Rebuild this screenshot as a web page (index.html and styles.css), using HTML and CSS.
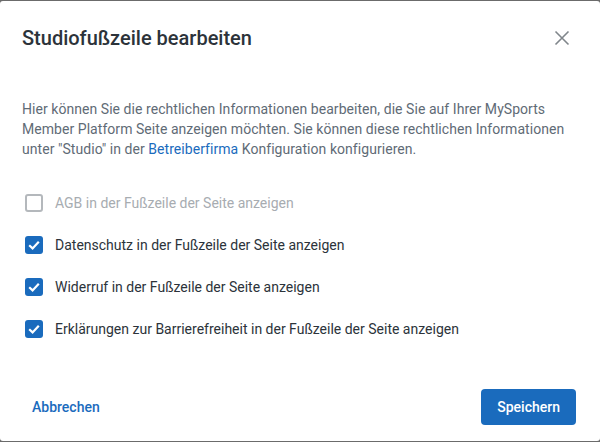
FILE: index.html
```html
<!DOCTYPE html>
<html lang="de">
<head>
    <meta charset="UTF-8">
    <meta name="viewport" content="width=device-width, initial-scale=1.0">
    <title>Studiofußzeile bearbeiten</title>
    <link rel="stylesheet" href="styles.css">
</head>
<body>
    <div class="dialog">
        <div class="dialog-header">
            <h1>Studiofußzeile bearbeiten</h1>
            <button class="close-btn" aria-label="Schließen">
                <svg width="16" height="16" viewBox="0 0 16 16">
                    <path d="M1.5 1.5 L14.5 14.5 M14.5 1.5 L1.5 14.5" stroke="currentColor" stroke-width="1.6" fill="none"/>
                </svg>
            </button>
        </div>

        <div class="dialog-body">
            <p class="intro">
                Hier können Sie die rechtlichen Informationen bearbeiten, die Sie auf Ihrer MySports
                Member Platform Seite anzeigen möchten. Sie können diese rechtlichen Informationen
                unter "Studio" in der <a href="#">Betreiberfirma</a> Konfiguration konfigurieren.
            </p>

            <div class="options">
                <label class="option disabled">
                    <span class="box"></span>
                    AGB in der Fußzeile der Seite anzeigen
                </label>
                <label class="option">
                    <span class="box checked"><svg viewBox="0 0 18 18"><path d="M4.2 9.2 L7.6 12.4 L13.8 5.8" /></svg></span>
                    Datenschutz in der Fußzeile der Seite anzeigen
                </label>
                <label class="option">
                    <span class="box checked"><svg viewBox="0 0 18 18"><path d="M4.2 9.2 L7.6 12.4 L13.8 5.8" /></svg></span>
                    Widerruf in der Fußzeile der Seite anzeigen
                </label>
                <label class="option">
                    <span class="box checked"><svg viewBox="0 0 18 18"><path d="M4.2 9.2 L7.6 12.4 L13.8 5.8" /></svg></span>
                    Erklärungen zur Barrierefreiheit in der Fußzeile der Seite anzeigen
                </label>
            </div>
        </div>

        <div class="dialog-footer">
            <button class="btn btn-text">Abbrechen</button>
            <button class="btn btn-primary">Speichern</button>
        </div>
    </div>
</body>
</html>
```

FILE: styles.css
```css
:root {
    --blue: #1a6bbd;
    --text: #2c333a;
    --muted: #5f6b76;
}

html, body {
    height: 100%;
}

body {
    margin: 0;
    padding: 1px 0;
    box-sizing: border-box;
    background: #6b6b6b;
    font-family: Roboto, "Noto Sans", sans-serif;
    color: var(--text);
}

.dialog {
    height: 440px;
    background: #fff;
    border-radius: 3px;
    display: flex;
    flex-direction: column;
}

.dialog-header {
    display: flex;
    align-items: center;
    justify-content: space-between;
    padding: 23px 30px 0 22px;
}

.dialog-header h1 {
    margin: 0;
    font-size: 20px;
    line-height: 28px;
    font-weight: 500;
    color: var(--text);
}

.close-btn {
    border: 0;
    background: none;
    padding: 0;
    color: #80868b;
    display: flex;
}

.dialog-body {
    padding: 0 22px;
}

.intro {
    margin: 47px 0 0;
    font-size: 14px;
    line-height: 20px;
    letter-spacing: 0.05px;
    color: var(--muted);
}

.intro a {
    color: var(--blue);
    text-decoration: none;
}

.options {
    margin-top: 23px;
    padding-left: 3px;
}

.option {
    display: flex;
    align-items: center;
    gap: 12px;
    height: 42px;
    font-size: 14px;
    color: var(--text);
}

.option.disabled {
    color: #a7acb1;
}

.box {
    width: 18px;
    height: 18px;
    box-sizing: border-box;
    border: 2px solid #b4b8bc;
    border-radius: 3px;
    flex-shrink: 0;
}

.box.checked {
    border: 0;
    background: var(--blue);
}

.box svg {
    display: block;
    width: 18px;
    height: 18px;
}

.box path {
    fill: none;
    stroke: #fff;
    stroke-width: 2.2;
}

.dialog-footer {
    margin-top: auto;
    display: flex;
    justify-content: space-between;
    align-items: center;
    padding: 0 24px 16px 16px;
}

.btn {
    font-family: inherit;
    font-size: 14px;
    font-weight: 500;
    height: 36px;
    padding: 0 16px;
    border: 0;
    border-radius: 4px;
    background: none;
}

.btn-text {
    color: var(--blue);
}

.btn-primary {
    background: var(--blue);
    color: #fff;
}
```
